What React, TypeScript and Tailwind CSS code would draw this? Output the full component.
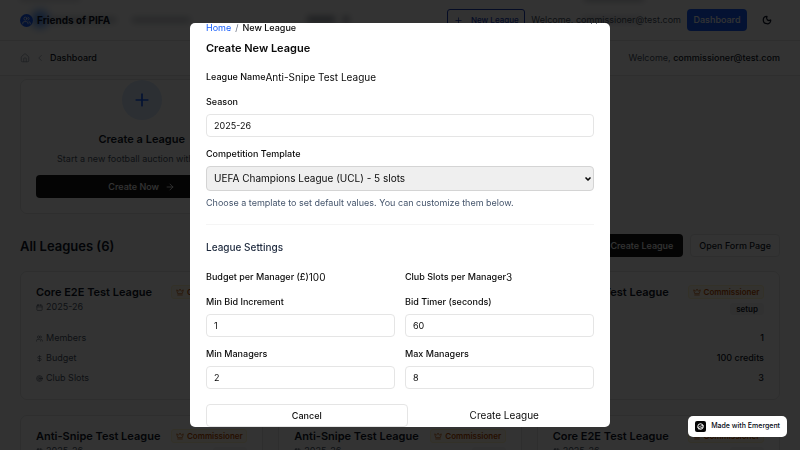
import React from "react";
import {
  ArrowRight,
  Calendar,
  ChevronDown,
  ChevronLeft,
  Crown,
  DollarSign,
  House,
  Moon,
  Plus,
  Target,
  Users,
  X,
} from "lucide-react";

type League = { name: string; season: string; members: string; budget: string; slots: string };

const core: League = { name: "Core E2E Test League", season: "2025-26", members: "1", budget: "100 credits", slots: "3" };
const snipe: League = { ...core, name: "Anti-Snipe Test League" };
const leagues: League[] = [core, core, core, snipe, snipe, core];

function Header() {
  return (
    <header className="relative flex h-[41px] shrink-0 items-center justify-between overflow-hidden border-b border-neutral-200 bg-white px-5">
      <div aria-hidden="true" className="absolute inset-0">
        <div className="absolute left-[31px] top-[10px] size-[18px] rounded-full bg-blue-500/80 blur-[4px]" />
        <div className="absolute left-[50px] top-[17px] h-[6px] w-[66px] bg-gray-500/40 blur-[3px]" />
        <div className="absolute left-[132px] top-[17px] h-[6px] w-[58px] bg-gray-500/40 blur-[3px]" />
        <div className="absolute left-[307px] top-[16px] h-[7px] w-[28px] bg-gray-700/50 blur-[3px]" />
        <div className="absolute left-[343px] top-[16px] h-[7px] w-[6px] bg-gray-700/50 blur-[3px]" />
        <div className="absolute -top-1 left-[584px] h-[5px] w-[60px] bg-gray-500/50 blur-[3px]" />
        <div className="absolute -top-1 left-[20px] h-[5px] w-[60px] bg-gray-500/30 blur-[3px]" />
        <div className="absolute left-[582px] top-[17px] h-[6px] w-[60px] bg-gray-500/30 blur-[3px]" />
      </div>
      <div className="relative flex items-center gap-1">
        <span className="flex size-[13px] items-center justify-center rounded-full bg-blue-600 text-white">
          <Users size={9} strokeWidth={2} />
        </span>
        <span className="text-[10px] font-bold leading-4 text-gray-900">Friends of PIFA</span>
      </div>
      <div className="relative flex items-center gap-[6px]">
        <button className="flex h-[22px] w-[78px] items-center justify-center gap-2 rounded-[3px] border border-blue-800 bg-gray-50 text-[8px] font-medium text-blue-800">
          <Plus size={9} />
          New League
        </button>
        <span className="text-[9px] text-gray-600">Welcome, commissioner@test.com</span>
        <button className="h-[22px] w-[60px] rounded-[4px] bg-blue-600 text-[9px] font-medium text-white">
          Dashboard
        </button>
        <button aria-label="Toggle theme" className="flex h-[22px] w-[27px] items-center justify-center text-gray-900">
          <Moon size={10} strokeWidth={3} />
        </button>
      </div>
    </header>
  );
}

function Breadcrumbs() {
  return (
    <nav className="flex h-[35px] shrink-0 items-center justify-between border-b border-neutral-200 bg-white px-5 text-[9px]">
      <div className="flex items-center gap-[5px]">
        <House size={10} className="text-gray-400" />
        <ChevronLeft size={10} className="text-gray-400" />
        <span className="font-medium text-gray-900">Dashboard</span>
      </div>
      <p className="text-gray-600">
        Welcome, <span className="font-medium text-gray-900">commissioner@test.com</span>
      </p>
    </nav>
  );
}

function Stat({ icon, label, value }: { icon: React.ReactNode; label: string; value: string }) {
  return (
    <div className="flex h-3 items-center justify-between text-[9px]">
      <span className="flex items-center gap-[3px] text-gray-600">
        {icon}
        {label}
      </span>
      <span className="font-medium text-gray-900">{value}</span>
    </div>
  );
}

function LeagueCard({ league }: { league: League }) {
  return (
    <article className="h-[129px] rounded-[7px] border border-neutral-200 bg-white px-[15px] pt-[13px]">
      <div className="flex items-start justify-between">
        <div>
          <h3 className="whitespace-nowrap text-[11px] font-semibold leading-[14px] text-gray-900">{league.name}</h3>
          <p className="mt-[2px] flex items-center gap-[3px] text-[9px] leading-3 text-gray-600">
            <Calendar size={7} />
            {league.season}
          </p>
        </div>
        <div className="flex flex-col items-end gap-1">
          <span className="flex h-[14px] w-[76px] items-center justify-center gap-[3px] rounded-[3px] border border-amber-100 bg-amber-50 text-[8px] font-semibold text-amber-700">
            <Crown size={8} />
            Commissioner
          </span>
          <span className="flex h-3 items-center rounded-[3px] bg-gray-100 px-[6px] text-[8px] font-semibold text-gray-900">
            setup
          </span>
        </div>
      </div>
      <div className="mt-[17px] flex flex-col gap-2">
        <Stat icon={<Users size={7} />} label="Members" value={league.members} />
        <Stat icon={<DollarSign size={7} />} label="Budget" value={league.budget} />
        <Stat icon={<Target size={7} />} label="Club Slots" value={league.slots} />
      </div>
    </article>
  );
}

function Dashboard() {
  return (
    <main className="px-5 pt-[3px]">
      <div className="grid grid-cols-3 gap-[15px]">
        <section className="flex h-[135px] flex-col items-center rounded-[7px] border border-neutral-200 bg-white px-[15px]">
          <span className="flex size-10 shrink-0 items-center justify-center rounded-full bg-blue-100 text-blue-600">
            <Plus size={20} />
          </span>
          <h2 className="mt-3 whitespace-nowrap text-[11px] font-semibold leading-[14px] text-gray-900">Create a League</h2>
          <p className="mt-[7px] whitespace-nowrap text-[9px] leading-3 text-gray-600">Start a new football auction with friends</p>
          <button className="mt-[10px] flex h-[23px] w-full shrink-0 items-center justify-center gap-[6px] rounded-[4px] bg-neutral-900 text-[9px] font-medium text-white">
            Create Now
            <ArrowRight size={10} />
          </button>
        </section>
      </div>
      <div className="mt-5 flex items-center justify-between">
        <h2 className="text-[13px] font-semibold leading-5 text-gray-900">All Leagues (6)</h2>
        <div className="flex gap-[7px] text-[9px] font-medium">
          <button className="h-[23px] rounded-[4px] bg-neutral-900 px-[10px] text-white">Create League</button>
          <button className="h-[23px] rounded-[4px] border border-neutral-200 bg-white px-2 text-gray-900">Open Form Page</button>
        </div>
      </div>
      <div className="mt-[14px] grid grid-cols-3 gap-[15px]">
        {leagues.map((league, i) => (
          <LeagueCard key={i} league={league} />
        ))}
      </div>
    </main>
  );
}

function Field({ id, label, value }: { id: string; label: string; value: string }) {
  return (
    <div className="flex flex-col gap-[6px]">
      <label htmlFor={id} className="text-[9px] font-medium leading-3">
        {label}
      </label>
      <input
        id={id}
        defaultValue={value}
        className="h-[23px] w-full rounded-[4px] border border-neutral-200 bg-white px-[7px] text-[9px] outline-none"
      />
    </div>
  );
}

function StaticField({ label, value }: { label: string; value: string }) {
  return (
    <p className="flex h-4 items-center">
      <span className="text-[9px] font-medium">{label}</span>
      <span className="text-[10px]">{value}</span>
    </p>
  );
}

function CreateLeagueDialog() {
  return (
    <div className="fixed inset-0 flex justify-center bg-black/80 py-[23px]">
      <div
        role="dialog"
        aria-modal="true"
        aria-labelledby="dialog-title"
        className="relative h-full w-full max-w-[420px] overflow-hidden rounded-[5px] bg-white px-4 text-neutral-950"
      >
        <button aria-label="Close" className="absolute -top-[7px] right-[11px] text-gray-700">
          <X size={10} />
        </button>
        <nav className="flex gap-1 text-[9px] leading-[10px]">
          <a href="#home" className="text-blue-600">
            Home
          </a>
          <span className="text-gray-500">/</span>
          <span className="font-medium">New League</span>
        </nav>
        <h2 id="dialog-title" className="mt-2 text-[11px] font-semibold leading-[14px]">
          Create New League
        </h2>
        <form className="mt-[14px]" onSubmit={(e) => e.preventDefault()}>
          <div className="flex flex-col gap-[11px]">
            <StaticField label="League Name" value="Anti-Snipe Test League" />
            <Field id="season" label="Season" value="2025-26" />
            <div className="flex flex-col">
              <label htmlFor="template" className="text-[9px] font-medium leading-3">
                Competition Template
              </label>
              <div className="relative mt-[6px]">
                <select
                  id="template"
                  className="block h-[25px] w-full appearance-none rounded-[4px] border border-neutral-300 bg-[#efefef] px-[7px] text-[10px] outline-none"
                >
                  <option>UEFA Champions League (UCL) - 5 slots</option>
                </select>
                <ChevronDown
                  size={8}
                  strokeWidth={5}
                  className="pointer-events-none absolute right-[2px] top-[9px]"
                />
              </div>
              <p className="mt-[5px] text-[9px] leading-[13px] text-slate-600">
                Choose a template to set default values. You can customize them below.
              </p>
            </div>
          </div>
          <section className="mt-[15px] border-t border-neutral-100 pt-[15px]">
            <h3 className="text-[10px] font-medium leading-[14px] text-slate-800">League Settings</h3>
            <div className="mt-[15px] grid grid-cols-2 gap-x-[10px] gap-y-[11px]">
              <StaticField label="Budget per Manager (£)" value="100" />
              <StaticField label="Club Slots per Manager" value="3" />
              <Field id="min-bid" label="Min Bid Increment" value="1" />
              <Field id="timer" label="Bid Timer (seconds)" value="60" />
              <Field id="min-managers" label="Min Managers" value="2" />
              <Field id="max-managers" label="Max Managers" value="8" />
            </div>
          </section>
          <div className="mt-[15px] flex gap-[7px]">
            <button
              type="button"
              className="h-[23px] flex-1 rounded-[4px] border border-neutral-200 bg-white px-[10px] text-[9px] font-medium"
            >
              Cancel
            </button>
            <button type="submit" className="h-[23px] flex-1 text-[10px]">
              Create League
            </button>
          </div>
        </form>
      </div>
    </div>
  );
}

function EmergentBadge() {
  return (
    <a
      href="#emergent"
      className="fixed bottom-[13px] right-[13px] flex h-[21px] items-center gap-[5px] whitespace-nowrap rounded-[5px] bg-white px-[7px] text-[7px] font-medium text-gray-950"
    >
      <svg viewBox="0 0 22 22" className="size-[11px] shrink-0" aria-hidden="true">
        <rect width="22" height="22" rx="4" fill="#050505" />
        <circle cx="11" cy="11" r="5.5" fill="none" stroke="white" strokeWidth="2" />
        <path
          d="M5 13 C9 13 12 8 17 9 M6.500 16 C10 15.500 13 11.500 16.500 12"
          fill="none"
          stroke="white"
          strokeWidth="1.5"
        />
      </svg>
      Made with Emergent
    </a>
  );
}

export default function App() {
  return (
    <div className="flex h-screen flex-col overflow-hidden bg-gray-50 font-['Inter',sans-serif]">
      <Header />
      <Breadcrumbs />
      <Dashboard />
      <CreateLeagueDialog />
      <EmergentBadge />
    </div>
  );
}
